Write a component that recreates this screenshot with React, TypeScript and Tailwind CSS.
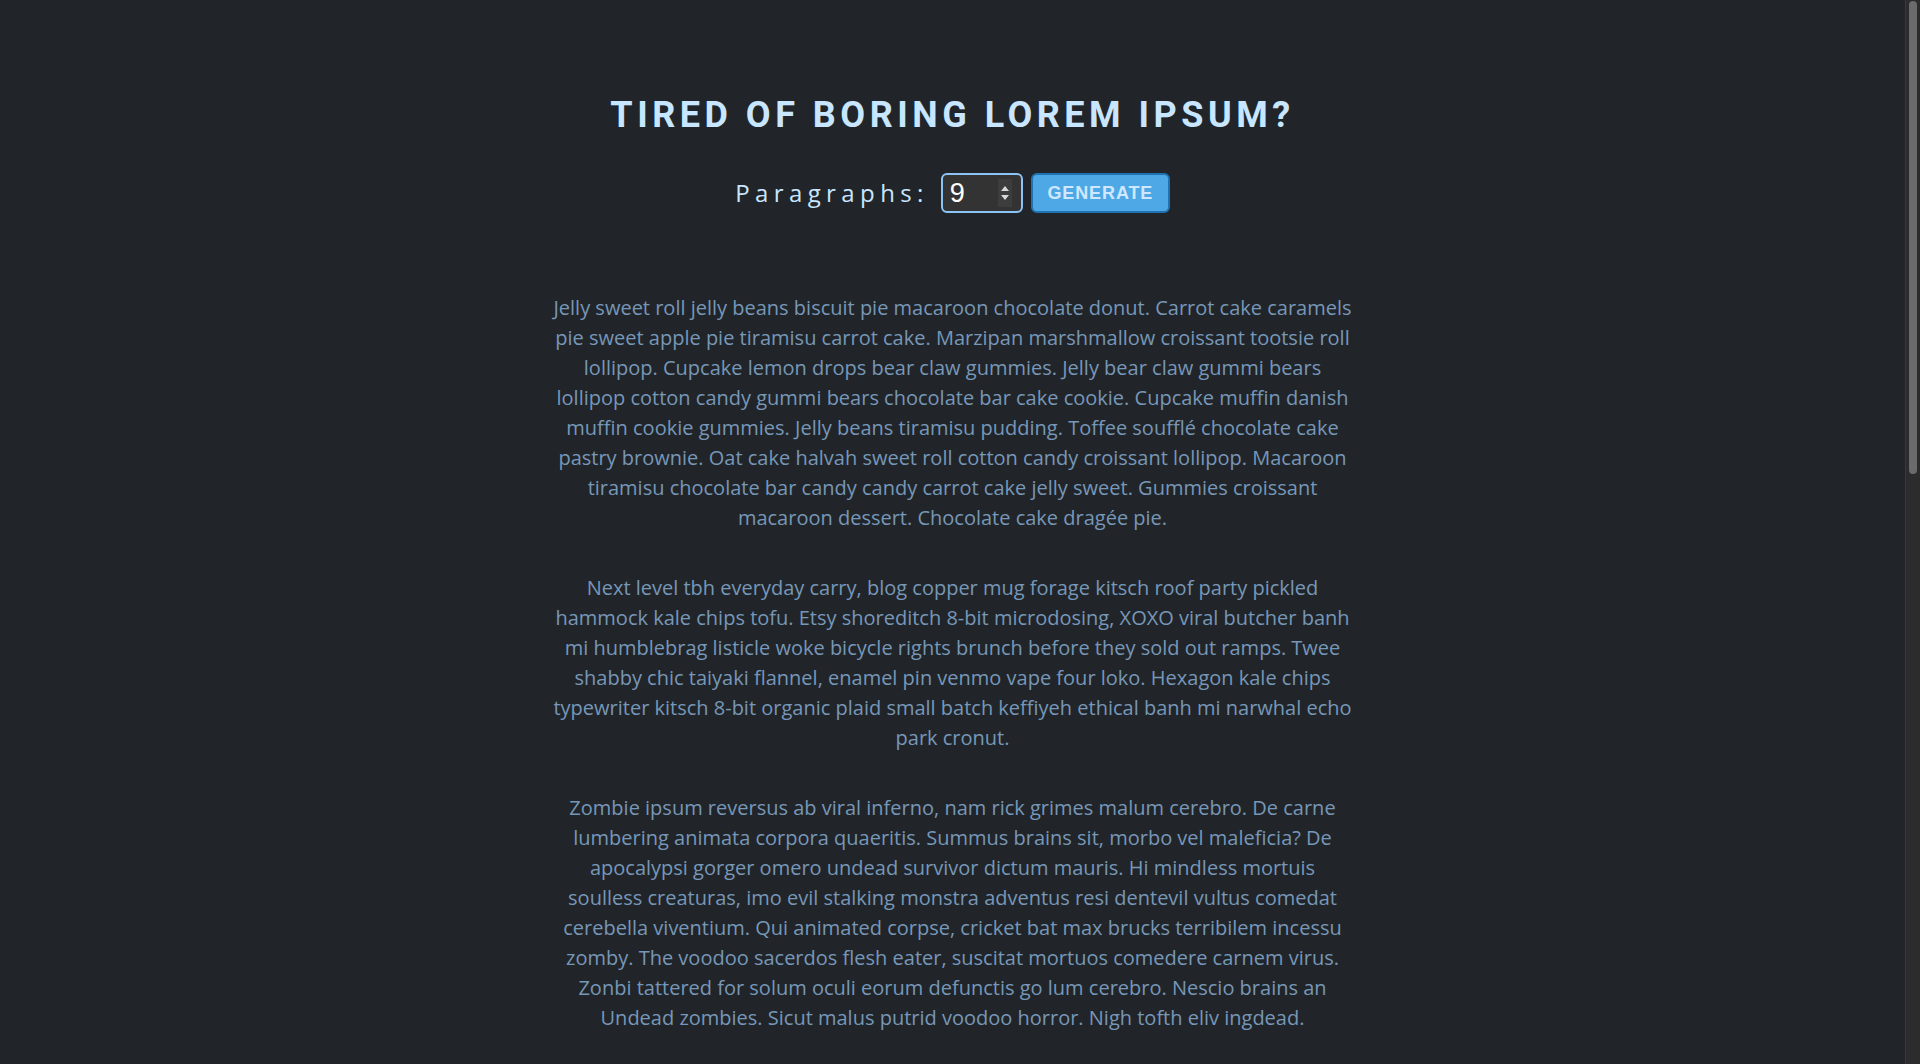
import { useState } from 'react';

const PARAGRAPHS = [
  'Jelly sweet roll jelly beans biscuit pie macaroon chocolate donut. Carrot cake caramels pie sweet apple pie tiramisu carrot cake. Marzipan marshmallow croissant tootsie roll lollipop. Cupcake lemon drops bear claw gummies. Jelly bear claw gummi bears lollipop cotton candy gummi bears chocolate bar cake cookie. Cupcake muffin danish muffin cookie gummies. Jelly beans tiramisu pudding. Toffee soufflé chocolate cake pastry brownie. Oat cake halvah sweet roll cotton candy croissant lollipop. Macaroon tiramisu chocolate bar candy candy carrot cake jelly sweet. Gummies croissant macaroon dessert. Chocolate cake dragée pie.',
  'Next level tbh everyday carry, blog copper mug forage kitsch roof party pickled hammock kale chips tofu. Etsy shoreditch 8-bit microdosing, XOXO viral butcher banh mi humblebrag listicle woke bicycle rights brunch before they sold out ramps. Twee shabby chic taiyaki flannel, enamel pin venmo vape four loko. Hexagon kale chips typewriter kitsch 8-bit organic plaid small batch keffiyeh ethical banh mi narwhal echo park cronut.',
  'Zombie ipsum reversus ab viral inferno, nam rick grimes malum cerebro. De carne lumbering animata corpora quaeritis. Summus brains sit, morbo vel maleficia? De apocalypsi gorger omero undead survivor dictum mauris. Hi mindless mortuis soulless creaturas, imo evil stalking monstra adventus resi dentevil vultus comedat cerebella viventium. Qui animated corpse, cricket bat max brucks terribilem incessu zomby. The voodoo sacerdos flesh eater, suscitat mortuos comedere carnem virus. Zonbi tattered for solum oculi eorum defunctis go lum cerebro. Nescio brains an Undead zombies. Sicut malus putrid voodoo horror. Nigh tofth eliv ingdead.',
  'Bacon ipsum dolor amet pork belly brisket short ribs, pancetta chuck shank tenderloin. Jowl ground round kevin, beef ribs picanha filet mignon turducken tri-tip. Burgdoggen boudin ham hock, sausage andouille venison ribeye pastrami. Salami meatball kielbasa strip steak, swine prosciutto spare ribs capicola buffalo. Shoulder bresaola leberkas frankfurter tongue chislic.',
  'Cat ipsum dolor sit amet, knock over christmas tree sleep on keyboard. Chase red laser dot lick butt and make a weird face, stare at ceiling light. Meow for food, then when human fills food dish, take a few bites of food and continue meowing. Purr while eating knock dish off table head butt cant eat out of my own dish. Hide when guests come over scratch the box.',
  'Hipster ipsum tattooed brunch, pour-over selvage cold-pressed gastropub fixie. Artisan sriracha disrupt, mlkshk meditation lumbersexual fingerstache. Pitchfork chambray wolf, iceland cardigan asymmetrical mustache semiotics. Franzen quinoa pabst, church-key poutine retro biodiesel lomo tousled jean shorts. Sustainable yr air plant, gochujang taxidermy subway tile.',
  'Cupcake ipsum dolor sit amet halvah sugar plum. Wafer liquorice chupa chups brownie tart candy canes. Pie gingerbread cheesecake sesame snaps marzipan jelly-o. Powder jujubes sweet roll icing caramels danish. Lemon drops bonbon candy cotton candy ice cream soufflé tootsie roll. Fruitcake jelly beans apple pie biscuit toffee.',
  'Pirate ipsum ahoy matey, yo-ho-ho scallywag bilge rat. Belay landlubber grog blossom cutlass, jolly roger gangplank hornswaggle. Shiver me timbers doubloon careen, crow’s nest swab the deck mizzenmast. Bring a spring upon her cable yardarm quarterdeck, spanker lad schooner topsail. Avast black spot plunder, buccaneer davy jones’ locker.',
  'Veggie ipsum kohlrabi radish okra azuki bean corn fava bean mustard tigernut. Sea lettuce lettuce water chestnut eggplant winter purslane fennel. Celery potato scallion desert raisin horseradish spinach carrot soko. Lotus root water spinach fennel kombu maize bamboo shoot green bean swiss chard seakale pumpkin onion chickpea gram.',
];

function Spinner() {
  return (
    <div className="flex h-[28px] w-[18px] flex-col items-center justify-center gap-[4px] bg-[#3d3d3d]">
      <svg width="8" height="5" viewBox="0 0 8 5">
        <path d="M4 0 L8 5 L0 5 Z" fill="#d8d8d8" />
      </svg>
      <svg width="8" height="5" viewBox="0 0 8 5">
        <path d="M0 0 L8 0 L4 5 Z" fill="#d8d8d8" />
      </svg>
    </div>
  );
}

export default function App() {
  const [count, setCount] = useState(9);

  return (
    <div className="flex h-screen overflow-hidden bg-[#212529] [font-family:'Open_Sans',sans-serif]">
      <main className="flex-1 overflow-y-auto pb-24 [scrollbar-width:none]">
        <div className="mx-auto flex max-w-[800px] flex-col items-center pt-[94px]">
          <h1 className="text-[36px] font-bold uppercase leading-[43px] tracking-[0.125em] text-[#c8e6ff] [font-family:Roboto,'Liberation_Sans',sans-serif]">
            Tired of boring lorem ipsum?
          </h1>

          <div className="mt-[36px] flex items-center gap-2">
            <label htmlFor="count" className="mr-1 text-[24px] tracking-[0.225em] text-[#c8e6ff]">
              Paragraphs:
            </label>
            <div className="flex h-10 w-[82px] items-center rounded-md border-2 border-[#8cc4f5] bg-[#333333] pr-[9px]">
              <input
                id="count"
                type="text"
                inputMode="numeric"
                value={count}
                onChange={(e) => setCount(Number(e.target.value) || 0)}
                className="w-full min-w-0 bg-transparent pl-[7px] text-[27px] leading-none text-white outline-none [font-family:'Liberation_Sans',sans-serif]"
              />
              <Spinner />
            </div>
            <button
              type="button"
              className="h-10 w-[139px] rounded-md border-2 border-[#1f73b3] bg-[#4ea8e6] text-[18px] font-bold tracking-[0.05em] text-[#cfe8ff] [font-family:'Liberation_Sans',sans-serif]"
            >
              GENERATE
            </button>
          </div>

          <div className="mt-[80px] flex flex-col gap-[40px]">
            {PARAGRAPHS.slice(0, count).map((text, i) => (
              <p key={i} className="text-center text-[20px] leading-[30px] text-[#7797b8]">
                {text}
              </p>
            ))}
          </div>
        </div>
      </main>

      {/* page scrollbar */}
      <div className="w-[15px] shrink-0 border-l border-[#3a3a3a] bg-[#2c2c2c] pl-[3px] pr-[3px] pt-[1px]">
        <div className="h-[473px] rounded-full bg-[#6b6b6b]" />
      </div>
    </div>
  );
}
